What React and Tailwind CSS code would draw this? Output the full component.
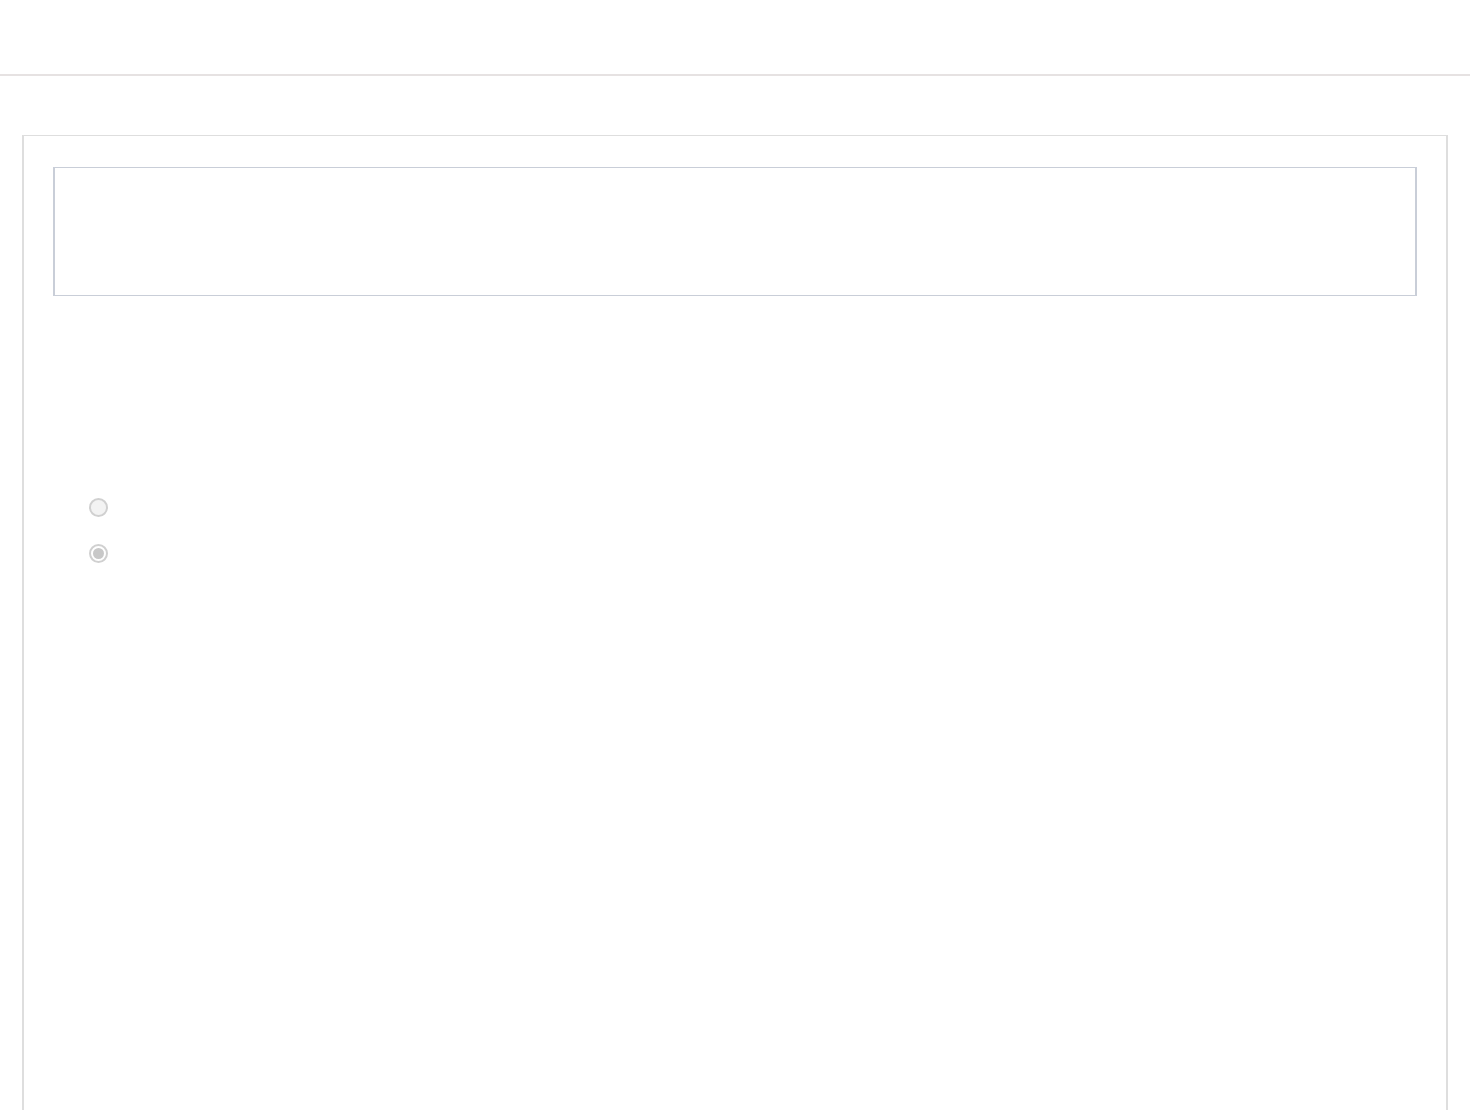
export default function App() {
  return (
    <div className="min-h-screen bg-white font-['Liberation_Sans',sans-serif]">
      <header className="h-[76px] border-b-2 border-[#e6e2e2]" />

      <main className="px-[22px] pt-[59px]">
        <section className="min-h-[1100px] border-x-2 border-t border-[#dedede] px-[29px] pt-[31px]">
          <div className="h-[129px] border-x-2 border-y border-[#c9ced8]" />

          <div className="mt-[202px] flex flex-col gap-[27px] pl-[36px]">
            <span className="flex h-[19px] w-[19px] items-center justify-center rounded-full border-2 border-[#d0d0d0] bg-[#f3f3f3]" />
            <span className="flex h-[19px] w-[19px] items-center justify-center rounded-full border-2 border-[#d0d0d0] bg-white">
              <span className="h-[11px] w-[11px] rounded-full bg-[#c8c8c8]" />
            </span>
          </div>
        </section>
      </main>
    </div>
  );
}
